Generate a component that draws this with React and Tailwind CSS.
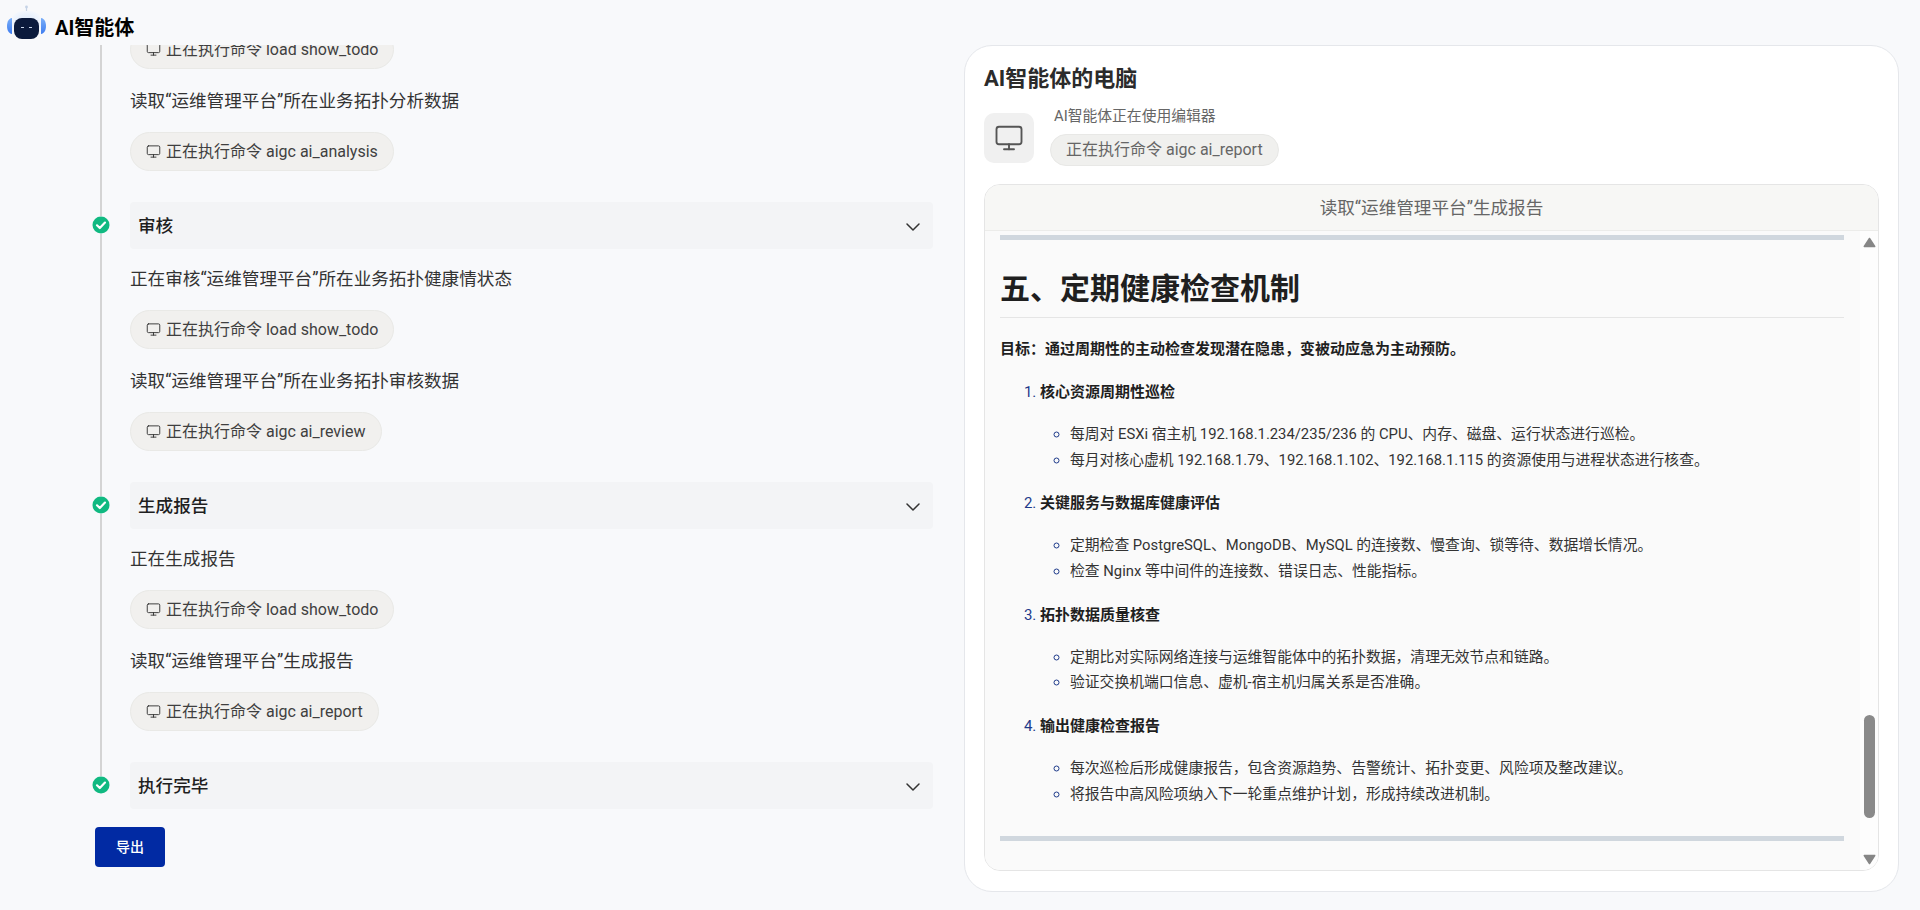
import React from 'react';
import { Monitor, ChevronDown } from 'lucide-react';

const FONT = 'Roboto, "Noto Sans CJK SC", sans-serif';

const Logo = () => (
  <svg width="44" height="36" viewBox="0 0 44 36" fill="none">
    <defs>
      <radialGradient id="halo" cx="0.5" cy="0.5" r="0.5">
        <stop offset="0" stopColor="#d7e6fb" />
        <stop offset="1" stopColor="#f3f7fd" />
      </radialGradient>
      <linearGradient id="ear" x1="0" y1="0" x2="0" y2="1">
        <stop offset="0" stopColor="#79aef8" />
        <stop offset="1" stopColor="#3f7df0" />
      </linearGradient>
    </defs>
    <path d="M21.500 3v5" stroke="#c5d3e6" strokeWidth="1.200" />
    <circle cx="21.500" cy="3" r="1.400" fill="#c5d3e6" />
    <rect x="6" y="7" width="31" height="24" rx="12" fill="url(#halo)" />
    <path d="M7 14C3.500 14.500 2 18 2 22s1.500 7.500 5 8z" fill="url(#ear)" />
    <path d="M36 14c3.500.5 5 4 5 8s-1.500 7.500-5 8z" fill="url(#ear)" />
    <rect x="9" y="14" width="25" height="21" rx="8" fill="#0b1a3c" />
    <path d="M16 23.500h3M24 23.500h3" stroke="#c9d6ea" strokeWidth="1.200" />
  </svg>
);

const Check = () => (
  <svg width="18" height="18" viewBox="0 0 18 18" className="shrink-0">
    <circle cx="9" cy="9" r="8.500" fill="#10b981" />
    <path d="M5 9.300l2.800 2.700L13 6.600" fill="none" stroke="#fff" strokeWidth="2.200" strokeLinecap="round" strokeLinejoin="round" />
  </svg>
);

const Pill = ({ children }) => (
  <div className="inline-flex items-center gap-[5px] h-[39px] px-[15px] rounded-full bg-[#f1f0ee] border border-[#e9e9e6] text-[16px] text-[#3f3f3f] whitespace-pre">
    <Monitor size={15} strokeWidth={1.5} className="text-[#333]" />
    {children}
  </div>
);

const Row = ({ text, cmd, first }) => (
  <div className={first ? 'mt-4' : 'mt-[18px]'}>
    <div className="h-7 leading-7 text-[17.6px] text-[#333]">{text}</div>
    <div className="mt-[17px]"><Pill>{cmd}</Pill></div>
  </div>
);

const Step = ({ title, rows, last }) => (
  <div className="flex gap-5">
    <div className="w-[18px] flex flex-col items-center shrink-0">
      <div className="w-[2px] h-[14px] bg-[#d4d4d4]" />
      <Check />
      {!last && <div className="w-[2px] flex-1 bg-[#d4d4d4]" />}
    </div>
    <div className={`flex-1 ${last ? '' : 'pb-[31px]'}`}>
      <div className="h-[47px] flex items-center justify-between pl-2 pr-2 pt-[2px] bg-[#f3f4f6] rounded text-[17.6px] font-medium text-[#1f1f1f]">
        <span>{title}</span>
        <ChevronDown size={24} strokeWidth={1.5} className="text-[#333]" />
      </div>
      {rows.map((r, i) => <Row key={i} text={r[0]} cmd={r[1]} first={i === 0} />)}
    </div>
  </div>
);

const Sub = ({ items }) => (
  <ul className="list-[circle] pl-[30px] mt-[17px] text-[14.8px] marker:text-[#1e3a8a]">
    {items.map((t) => <li key={t} className="leading-[25.5px]">{t}</li>)}
  </ul>
);

const report = [
  ['核心资源周期性巡检', ['每周对 ESXi 宿主机 192.168.1.234/235/236 的 CPU、内存、磁盘、运行状态进行巡检。', '每月对核心虚机 192.168.1.79、192.168.1.102、192.168.1.115 的资源使用与进程状态进行核查。']],
  ['关键服务与数据库健康评估', ['定期检查 PostgreSQL、MongoDB、MySQL 的连接数、慢查询、锁等待、数据增长情况。', '检查 Nginx 等中间件的连接数、错误日志、性能指标。']],
  ['拓扑数据质量核查', ['定期比对实际网络连接与运维智能体中的拓扑数据，清理无效节点和链路。', '验证交换机端口信息、虚机-宿主机归属关系是否准确。']],
  ['输出健康检查报告', ['每次巡检后形成健康报告，包含资源趋势、告警统计、拓扑变更、风险项及整改建议。', '将报告中高风险项纳入下一轮重点维护计划，形成持续改进机制。']],
];

export default function App() {
  return (
    <div className="h-screen overflow-hidden flex flex-col bg-[#f8f9fb]" style={{ fontFamily: FONT }}>
      <header className="h-[45px] shrink-0 flex items-start pt-[4px] pl-[5px] gap-[6px]">
        <Logo />
        <span className="text-[20px] font-bold text-black leading-[48px]">AI智能体</span>
      </header>

      <main className="flex-1 min-h-0 flex">
        <section className="w-[964px] shrink-0 pl-[92px] pr-[31px] overflow-hidden">
          {/* list is scrolled: the first step only shows from its first command on */}
          <div className="flex gap-5">
            <div className="w-[18px] shrink-0 flex justify-center"><div className="w-[2px] bg-[#d4d4d4]" /></div>
            <div className="flex-1 pb-[31px]">
              <div className="-mt-[15px]"><Pill>正在执行命令 load show_todo</Pill></div>
              <Row text="读取“运维管理平台”所在业务拓扑分析数据" cmd="正在执行命令 aigc ai_analysis" />
            </div>
          </div>
          <Step title="审核" rows={[['正在审核“运维管理平台”所在业务拓扑健康情状态', '正在执行命令 load show_todo'], ['读取“运维管理平台”所在业务拓扑审核数据', '正在执行命令 aigc ai_review']]} />
          <Step title="生成报告" rows={[['正在生成报告', '正在执行命令 load show_todo'], ['读取“运维管理平台”生成报告', '正在执行命令 aigc ai_report']]} />
          <Step title="执行完毕" rows={[]} last />
          <button className="ml-[3px] mt-[18px] w-[70px] h-10 rounded bg-[#012aa3] text-white text-[14px] font-medium">导出</button>
        </section>

        <section className="flex-1 min-w-0 mr-[21px] mb-[18px] flex flex-col bg-white border border-[#e5e7eb] rounded-[28px] pt-[18px] px-[19px] pb-[20px]">
          <h2 className="h-[30px] leading-[30px] text-[22px] font-bold text-[#2b2b2b]">AI智能体的电脑</h2>
          <div className="mt-[11px] flex items-start gap-4">
            <div className="w-[50px] h-[50px] mt-2 rounded-[10px] bg-[#f0f0f0] flex items-center justify-center">
              <Monitor size={30} strokeWidth={1.5} className="text-[#555]" />
            </div>
            <div>
              <div className="mt-[1px] pl-[4px] h-5 leading-5 text-[14.8px] text-[#666]">AI智能体正在使用编辑器</div>
              <div className="mt-[8px] inline-flex items-center h-8 px-[15px] rounded-full bg-[#f0f0ee] border border-[#e8e8e6] text-[16px] text-[#666]">正在执行命令 aigc ai_report</div>
            </div>
          </div>

          <div className="mt-[18px] flex-1 min-h-0 flex flex-col border border-[#e5e5e5] rounded-2xl overflow-hidden">
            <div className="h-[46px] shrink-0 flex items-center justify-center pt-[2px] bg-[#f7f7f5] border-b border-[#ececea] text-[17.6px] text-[#666]">读取“运维管理平台”生成报告</div>
            <div className="flex-1 min-h-0 flex bg-[#fafafa]">
              <div className="flex-1 min-w-0 pl-[15px] pr-4 pt-[4px] text-[15px] text-[#333]">
                <div className="h-[5px] bg-[#d0d7de]" />
                <h1 className="mt-[30px] pb-[9px] border-b border-[#e5e5e5] text-[30px] leading-[38px] font-bold text-[#1f1f1f]">五、定期健康检查机制</h1>
                <p className="mt-[18px] leading-[26px] font-bold text-[#1f1f1f]">目标：通过周期性的主动检查发现潜在隐患，变被动应急为主动预防。</p>
                <ol className="list-decimal pl-10 mt-[17px] marker:text-[#1e3a8a]">
                  {report.map(([title, items]) => (
                    <li key={title} className="mb-[17.4px]">
                      <strong className="leading-[26px] font-bold text-[#1f1f1f]">{title}</strong>
                      <Sub items={items} />
                    </li>
                  ))}
                </ol>
                <div className="mt-[29px] h-[5px] bg-[#d0d7de]" />
              </div>
              <div className="w-[18px] shrink-0 flex flex-col items-center pt-[6px] pb-[5px] bg-[#fdfdfd]">
                <svg width="13" height="11" viewBox="0 0 13 11"><path d="M6.500 1.500L11.700 9.500H1.300z" fill="#868686" stroke="#868686" strokeWidth="1.500" strokeLinejoin="round" /></svg>
                <div className="flex-1" />
                <div className="w-[11px] h-[103px] rounded-full bg-[#8a8a8a]" />
                <div className="h-9" />
                <svg width="13" height="11" viewBox="0 0 13 11"><path d="M6.500 9.500L11.700 1.500H1.300z" fill="#868686" stroke="#868686" strokeWidth="1.500" strokeLinejoin="round" /></svg>
              </div>
            </div>
          </div>
        </section>
      </main>
    </div>
  );
}
